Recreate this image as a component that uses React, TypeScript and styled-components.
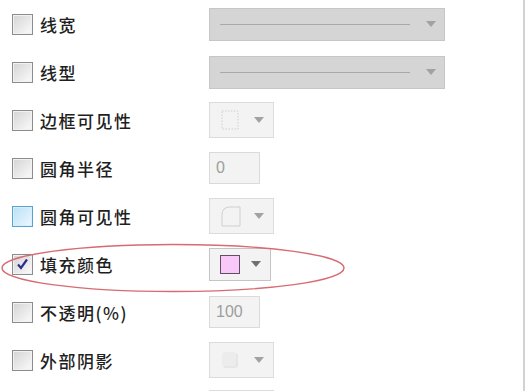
import React from 'react';
import styled, { createGlobalStyle } from 'styled-components';

const GlobalStyle = createGlobalStyle`
  html, body { margin: 0; padding: 0; background: #fff; overflow: hidden; }
  body { font-family: "Noto Sans CJK SC", "Noto Sans", sans-serif; }
`;

// --- Styled Components ---
const Panel = styled.div`
  position: relative;
  width: 523px;
  height: 391px;
  border-right: 2px solid #d2d2d2;
  overflow: hidden;
`;

const List = styled.div`
  display: flex;
  flex-direction: column;
`;

const Row = styled.div`
  display: grid;
  grid-template-columns: 197px auto;
  align-items: center;
  height: 48px;
  padding-left: 12px;
`;

const Option = styled.label`
  display: flex;
  align-items: center;
  gap: 7px;
  font-size: 17px;
  font-weight: 500;
  letter-spacing: 1.5px;
  color: #1f1f1f;
`;

const Check = styled.span<{ $hover?: boolean }>`
  width: 19px;
  height: 19px;
  display: flex;
  align-items: center;
  justify-content: center;
  border: 1px solid ${p => (p.$hover ? '#5aa2d2' : '#8c8c8c')};
  box-shadow: inset 0 0 0 1px ${p => (p.$hover ? '#d8effb' : '#f2f2f2')};
  background: ${p =>
    p.$hover
      ? 'linear-gradient(135deg, #b9e0f6, #eef8fe)'
      : 'linear-gradient(135deg, #d4d4d4, #fbfbfb)'};
`;

const WideSelect = styled.div`
  box-sizing: border-box;
  width: 236px;
  height: 33px;
  display: flex;
  align-items: center;
  padding: 0 8px 0 10px;
  gap: 14px;
  background: #d5d5d5;
  border: 1px solid #c6c6c6;
`;

const LineSample = styled.span`
  flex: 1;
  height: 1px;
  background: #a9a9a9;
  margin-right: 2px;
`;

const SmallSelect = styled.div<{ $h?: number; $w?: number; $border?: string }>`
  box-sizing: border-box;
  width: ${p => p.$w ?? 65}px;
  height: ${p => p.$h ?? 36}px;
  display: flex;
  align-items: center;
  justify-content: space-between;
  padding: 0 9px 0 10px;
  background: #f3f3f3;
  border: 1px solid ${p => p.$border ?? '#dcdcdc'};
`;

const Arrow = styled.span<{ $color?: string }>`
  width: 0;
  height: 0;
  border-left: 5px solid transparent;
  border-right: 5px solid transparent;
  border-top: 6px solid ${p => p.$color ?? '#a2a2a2'};
`;

const NumberBox = styled.div`
  box-sizing: border-box;
  width: 51px;
  height: 32px;
  display: flex;
  align-items: center;
  padding-left: 6px;
  background: #f3f3f3;
  border: 1px solid #dadada;
  font-family: "Liberation Sans", Arial, sans-serif;
  font-size: 16px;
  color: #9e9e9e;
`;

const Swatch = styled.span`
  width: 18px;
  height: 17px;
  background: #f8c8f8;
  border: 1px solid #5e4f66;
`;

const Overlay = styled.svg`
  position: absolute;
  left: 0;
  top: 0;
  pointer-events: none;
`;

// --- Ícones ---
const CheckMark = () => (
  <svg width="15" height="15" viewBox="0 0 15 15">
    <path d="M3 7.5 L6 11 L12 2.5" fill="none" stroke="#2e2e8e" strokeWidth="2.2" />
  </svg>
);

const DottedSquare = () => (
  <svg width="20" height="22" viewBox="0 0 20 22">
    <rect x="2" y="2" width="16" height="18" fill="none" stroke="#cfcfcf" strokeWidth="1" strokeDasharray="1.5 1.5" />
  </svg>
);

const RoundCorner = () => (
  <svg width="22" height="22" viewBox="0 0 22 22">
    <path d="M2 21 V10 Q2 2 10 2 H20 V21 Z" fill="none" stroke="#cfcfcf" strokeWidth="1" />
  </svg>
);

const ShadowSquare = () => (
  <svg width="20" height="20" viewBox="0 0 20 20">
    <rect x="3" y="3" width="15" height="15" rx="3" fill="#e6e6e6" />
    <rect x="2" y="2" width="14" height="14" rx="3" fill="#ececec" />
  </svg>
);

const Box = ({ checked, hover }: { checked?: boolean; hover?: boolean }) => (
  <Check $hover={hover}>{checked && <CheckMark />}</Check>
);

export default function App() {
  return (
    <>
      <GlobalStyle />
      <Panel>
        <List>
          <Row>
            <Option><Box />线宽</Option>
            <WideSelect><LineSample /><Arrow /></WideSelect>
          </Row>
          <Row>
            <Option><Box />线型</Option>
            <WideSelect><LineSample /><Arrow /></WideSelect>
          </Row>
          <Row>
            <Option><Box />边框可见性</Option>
            <SmallSelect><DottedSquare /><Arrow /></SmallSelect>
          </Row>
          <Row>
            <Option><Box />圆角半径</Option>
            <NumberBox>0</NumberBox>
          </Row>
          <Row>
            <Option><Box hover />圆角可见性</Option>
            <SmallSelect><RoundCorner /><Arrow /></SmallSelect>
          </Row>
          <Row>
            <Option><Box checked />填充颜色</Option>
            <SmallSelect $w={62} $h={33} $border="#c4c4c4"><Swatch /><Arrow $color="#707070" /></SmallSelect>
          </Row>
          <Row>
            <Option><Box />不透明(%)</Option>
            <NumberBox>100</NumberBox>
          </Row>
          <Row>
            <Option><Box />外部阴影</Option>
            <SmallSelect><ShadowSquare /><Arrow /></SmallSelect>
          </Row>
          <Row>
            <Option />
            <SmallSelect />
          </Row>
        </List>
        <Overlay width="528" height="391">
          <ellipse cx="173" cy="268" rx="171" ry="23.5" fill="none" stroke="#d86a72" strokeWidth="1.4" />
        </Overlay>
      </Panel>
    </>
  );
}
